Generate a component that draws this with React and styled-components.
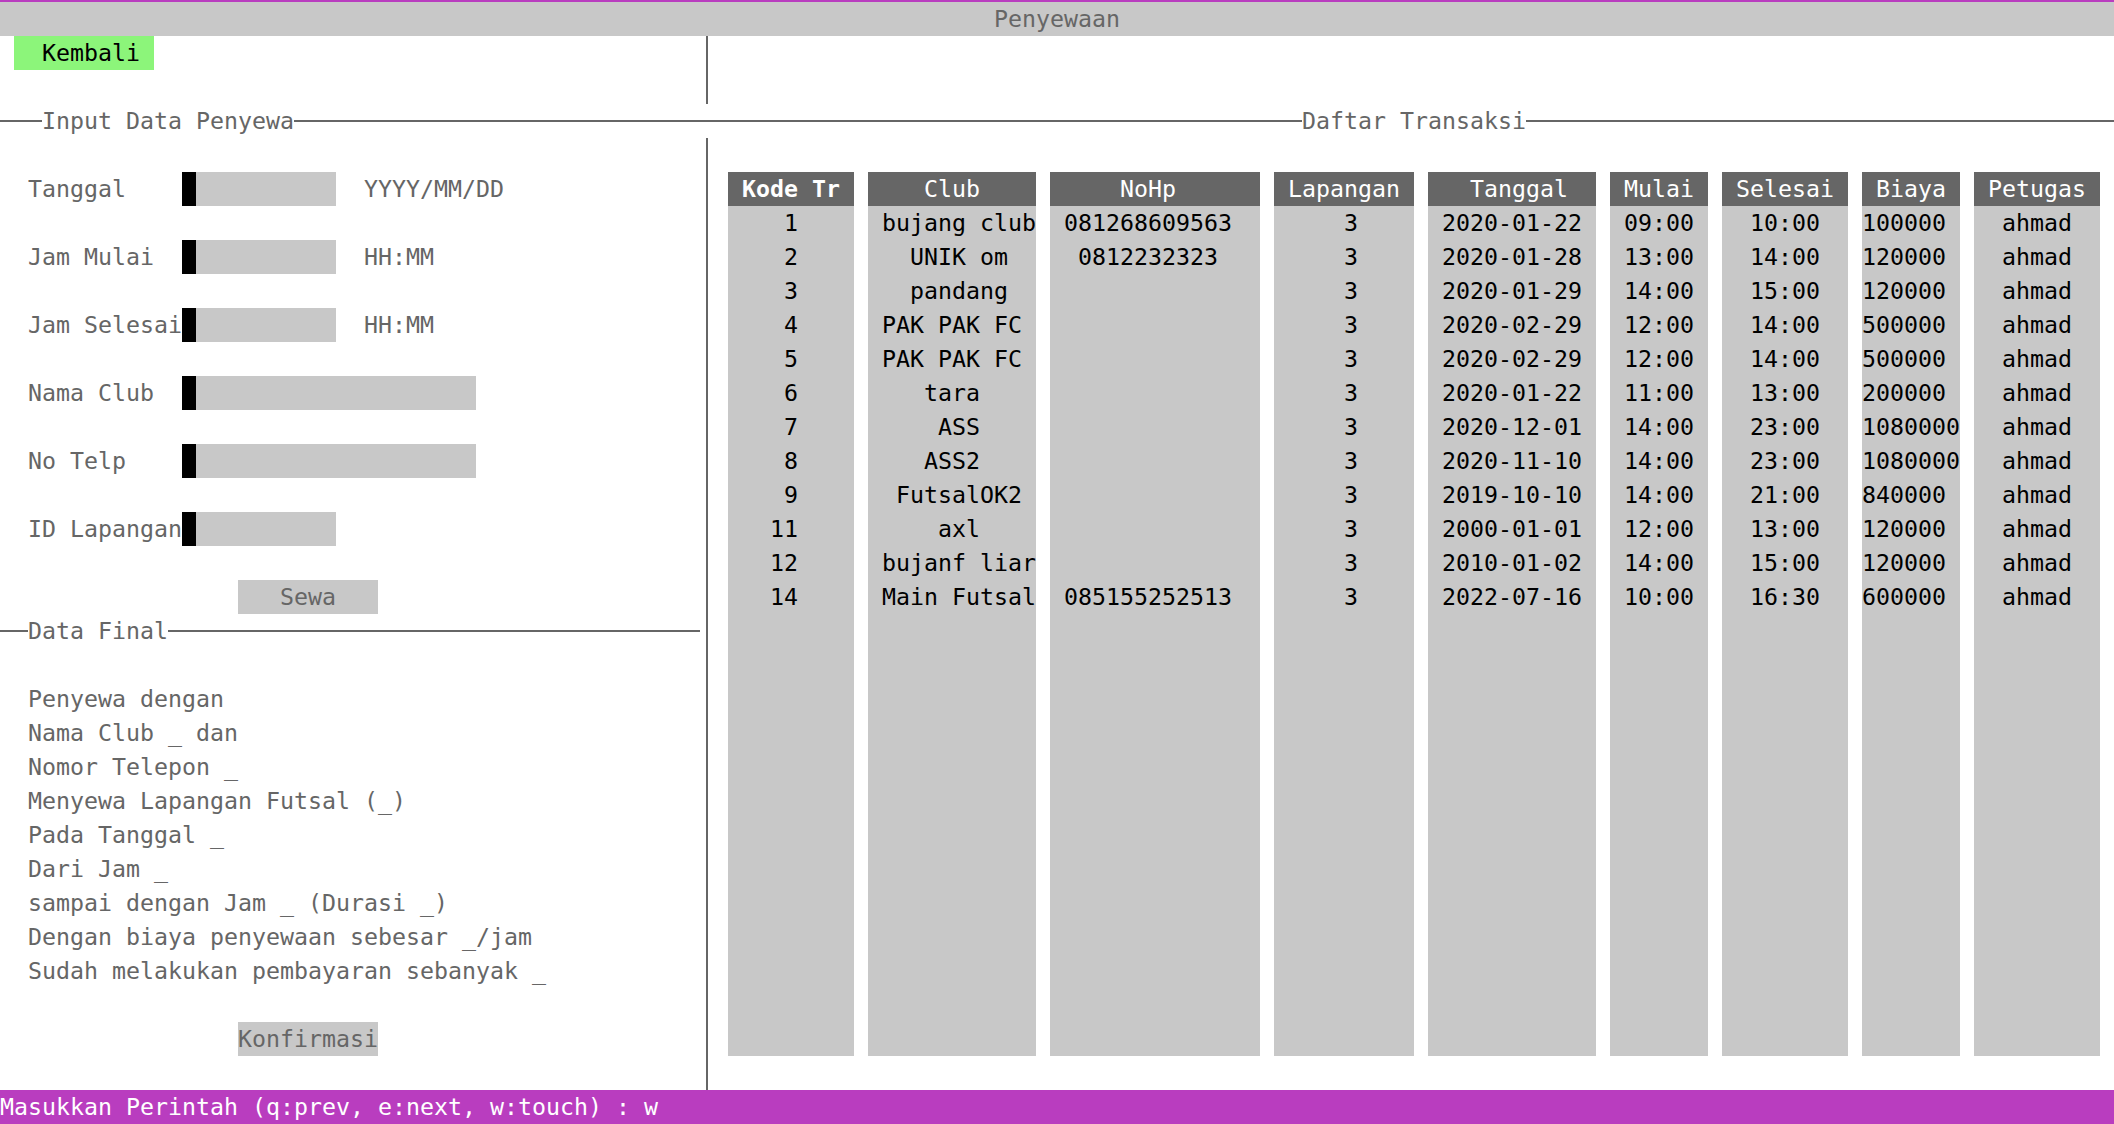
import React from "react";
import styled, { createGlobalStyle } from "styled-components";

const CW = 14;
const RH = 34;
const GRAY = "#c8c8c8";
const DARK = "#666666";
const MAGENTA = "#b93dbf";

const GlobalStyle = createGlobalStyle`
  html, body { margin: 0; padding: 0; background: #ffffff; }
  body {
    font-family: "DejaVu Sans Mono", "Liberation Mono", monospace;
    font-size: 23.25px;
    line-height: ${RH}px;
    color: ${DARK};
    overflow: hidden;
  }
  #root { width: 2114px; height: 1124px; }
`;

const Screen = styled.div`
  width: 2114px;
  height: 1124px;
  display: flex;
  flex-direction: column;
  background: #fff;
  white-space: pre;
`;

const TopStrip = styled.div`
  height: 2px;
  background: ${MAGENTA};
`;

const TitleBar = styled.div`
  height: ${RH}px;
  background: ${GRAY};
  color: ${DARK};
  text-align: center;
`;

const Split = styled.div`
  display: grid;
  grid-template-columns: ${50 * CW}px ${CW}px 1fr;
  height: ${(p) => p.$rows * RH}px;
`;

const Divider = styled.div`
  justify-self: center;
  width: 2px;
  background: ${DARK};
`;

const Pane = styled.div`
  display: flex;
  flex-direction: column;
  align-items: flex-start;
`;

const BackButton = styled.div`
  margin-left: ${CW}px;
  width: ${10 * CW}px;
  height: ${RH}px;
  background: #8cf57a;
  color: #000;
`;

const HeadingRow = styled.div`
  display: grid;
  grid-template-columns: ${51 * CW}px 1fr;
  height: ${RH}px;
`;

const Heading = styled.div`
  display: flex;
  align-items: center;
  height: ${RH}px;
  width: ${(p) => (p.$width ? `${p.$width}px` : "auto")};
`;

const Rule = styled.div`
  height: 2px;
  background: ${DARK};
  flex: ${(p) => (p.$size ? `0 0 ${p.$size}px` : "1 1 auto")};
`;

const HeadingTitle = styled.span`
  color: ${DARK};
`;

const Form = styled.div`
  display: flex;
  flex-direction: column;
  gap: ${RH}px;
  padding-top: ${RH}px;
`;

const Field = styled.div`
  display: flex;
  height: ${RH}px;
  padding-left: ${2 * CW}px;
`;

const Label = styled.span`
  width: ${11 * CW}px;
  overflow: hidden;
  color: ${DARK};
`;

const Cursor = styled.span`
  width: ${CW}px;
  background: #000;
`;

const InputFill = styled.span`
  width: ${(p) => p.$cols * CW}px;
  background: ${GRAY};
`;

const Hint = styled.span`
  margin-left: ${2 * CW}px;
  color: ${DARK};
`;

const Button = styled.div`
  margin-left: ${17 * CW}px;
  width: ${10 * CW}px;
  height: ${RH}px;
  background: ${GRAY};
  color: ${DARK};
  text-align: center;
`;

const Summary = styled.div`
  display: flex;
  flex-direction: column;
  padding-top: ${RH}px;
  padding-left: ${2 * CW}px;
  margin-bottom: ${RH}px;
`;

const SummaryLine = styled.div`
  height: ${RH}px;
  color: ${DARK};
`;

const Table = styled.div`
  display: flex;
  gap: ${CW}px;
  margin-top: ${RH}px;
  margin-left: ${CW}px;
`;

const Column = styled.div`
  width: ${(p) => p.$cols * CW}px;
  height: ${26 * RH}px;
  background: ${GRAY};
  display: flex;
  flex-direction: column;
`;

const HeadCell = styled.div`
  height: ${RH}px;
  background: ${DARK};
  color: #fff;
  font-weight: ${(p) => (p.$active ? 700 : 400)};
  overflow: hidden;
`;

const Cell = styled.div`
  height: ${RH}px;
  color: #000;
  overflow: hidden;
`;

const BottomBar = styled.div`
  height: ${RH}px;
  background: ${MAGENTA};
  color: #fff;
`;

const pad = (s, w, mode) => {
  const p = Math.max(0, w - s.length);
  const left = mode === "ceil" ? Math.ceil(p / 2) : Math.floor(p / 2);
  return " ".repeat(left) + s;
};

const columns = [
  { key: 0, title: "Kode Tr", cols: 9, mode: "floor", active: true },
  { key: 1, title: "Club", cols: 12, mode: "ceil" },
  { key: 2, title: "NoHp", cols: 15, mode: "floor" },
  { key: 3, title: "Lapangan", cols: 10, mode: "ceil" },
  { key: 4, title: "Tanggal", cols: 12, mode: "ceil" },
  { key: 5, title: "Mulai", cols: 7, mode: "floor" },
  { key: 6, title: "Selesai", cols: 9, mode: "floor" },
  { key: 7, title: "Biaya", cols: 7, mode: "floor" },
  { key: 8, title: "Petugas", cols: 9, mode: "floor" },
];

const rows = [
  ["1", "bujang club", "081268609563", "3", "2020-01-22", "09:00", "10:00", "100000", "ahmad"],
  ["2", "UNIK om", "0812232323", "3", "2020-01-28", "13:00", "14:00", "120000", "ahmad"],
  ["3", "pandang", "", "3", "2020-01-29", "14:00", "15:00", "120000", "ahmad"],
  ["4", "PAK PAK FC", "", "3", "2020-02-29", "12:00", "14:00", "500000", "ahmad"],
  ["5", "PAK PAK FC", "", "3", "2020-02-29", "12:00", "14:00", "500000", "ahmad"],
  ["6", "tara", "", "3", "2020-01-22", "11:00", "13:00", "200000", "ahmad"],
  ["7", "ASS", "", "3", "2020-12-01", "14:00", "23:00", "1080000", "ahmad"],
  ["8", "ASS2", "", "3", "2020-11-10", "14:00", "23:00", "1080000", "ahmad"],
  ["9", "FutsalOK2", "", "3", "2019-10-10", "14:00", "21:00", "840000", "ahmad"],
  ["11", "axl", "", "3", "2000-01-01", "12:00", "13:00", "120000", "ahmad"],
  ["12", "bujanf liar", "", "3", "2010-01-02", "14:00", "15:00", "120000", "ahmad"],
  ["14", "Main Futsal", "085155252513", "3", "2022-07-16", "10:00", "16:30", "600000", "ahmad"],
];

const fields = [
  { label: "Tanggal", cols: 10, hint: "YYYY/MM/DD" },
  { label: "Jam Mulai", cols: 10, hint: "HH:MM" },
  { label: "Jam Selesai", cols: 10, hint: "HH:MM" },
  { label: "Nama Club", cols: 20 },
  { label: "No Telp", cols: 20 },
  { label: "ID Lapangan", cols: 10 },
];

const summary = [
  "Penyewa dengan",
  "Nama Club _ dan",
  "Nomor Telepon _",
  "Menyewa Lapangan Futsal (_)",
  "Pada Tanggal _",
  "Dari Jam _",
  "sampai dengan Jam _ (Durasi _)",
  "Dengan biaya penyewaan sebesar _/jam",
  "Sudah melakukan pembayaran sebanyak _",
];

export default function App() {
  return (
    <>
      <GlobalStyle />
      <Screen>
        <TopStrip />
        <TitleBar>Penyewaan</TitleBar>

        <Split $rows={2}>
          <Pane>
            <BackButton>{"  Kembali "}</BackButton>
          </Pane>
          <Divider />
          <Pane />
        </Split>

        <HeadingRow>
          <Heading>
            <Rule $size={3 * CW} />
            <HeadingTitle>Input Data Penyewa</HeadingTitle>
            <Rule />
          </Heading>
          <Heading>
            <Rule />
            <HeadingTitle>Daftar Transaksi</HeadingTitle>
            <Rule />
          </Heading>
        </HeadingRow>

        <Split $rows={28}>
          <Pane>
            <Form>
              {fields.map((f) => (
                <Field key={f.label}>
                  <Label>{f.label}</Label>
                  <Cursor />
                  <InputFill $cols={f.cols} />
                  {f.hint && <Hint>{f.hint}</Hint>}
                </Field>
              ))}
              <Button>Sewa</Button>
            </Form>
            <Heading $width={50 * CW}>
              <Rule $size={2 * CW} />
              <HeadingTitle>Data Final</HeadingTitle>
              <Rule />
            </Heading>
            <Summary>
              {summary.map((s) => (
                <SummaryLine key={s}>{s}</SummaryLine>
              ))}
            </Summary>
            <Button>Konfirmasi</Button>
          </Pane>
          <Divider />
          <Pane>
            <Table>
              {columns.map((c) => (
                <Column key={c.key} $cols={c.cols}>
                  <HeadCell $active={c.active}>{pad(c.title, c.cols, c.title === "Tanggal" ? "ceil" : "floor")}</HeadCell>
                  {rows.map((r, i) => (
                    <Cell key={i}>{pad(r[c.key], c.cols, c.mode)}</Cell>
                  ))}
                </Column>
              ))}
            </Table>
          </Pane>
        </Split>

        <BottomBar>Masukkan Perintah (q:prev, e:next, w:touch) : w</BottomBar>
      </Screen>
    </>
  );
}
